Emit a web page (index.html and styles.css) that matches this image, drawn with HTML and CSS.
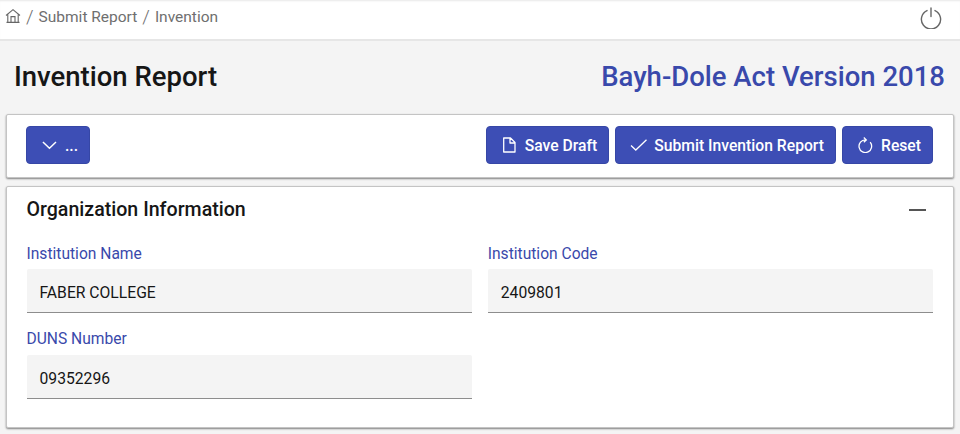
FILE: index.html
```html
<!DOCTYPE html>
<html lang="en">
<head>
<meta charset="utf-8">
<title>Invention Report</title>
<link rel="stylesheet" href="styles.css">
</head>
<body>
<header class="topbar">
  <nav class="crumbs">
    <svg class="home" viewBox="0 0 16 16" width="16" height="16"><path d="M1 7.500 8 1.600l7 5.900M2.800 6.200V14.400h10.400V6.200M6 14.400V8.600h4v5.800M1.500 14.400h13" fill="none" stroke="#666" stroke-width="1.100"/></svg>
    <span class="sep">/</span><span>Submit Report</span><span class="sep">/</span><span>Invention</span>
  </nav>
  <svg class="power" viewBox="0 0 22 22" width="22" height="22"><path d="M7 3.600a9.600 9.600 0 1 0 8 0M11 1v8.500" fill="none" stroke="#666" stroke-width="1.400" stroke-linecap="round"/></svg>
</header>
<main class="page">
  <div class="heading">
    <h1>Invention Report</h1>
    <div class="version">Bayh-Dole Act Version 2018</div>
  </div>
  <section class="card toolbar">
    <button class="btn menu-btn"><svg viewBox="0 0 16 16" width="16" height="16"><path d="M1 4.800 8 11.500l7-6.700" fill="none" stroke="#fff" stroke-width="1.600"/></svg><span>...</span></button>
    <div class="actions">
      <button class="btn"><svg viewBox="0 0 17 16" width="17" height="16"><path d="M2.700 1h6.800L14 5.500V15H2.700zM9 1V6h5" fill="none" stroke="#fff" stroke-width="1.300" stroke-linejoin="round"/></svg><span>Save Draft</span></button>
      <button class="btn"><svg viewBox="0 0 17 16" width="17" height="16"><path d="M1 8.500 5.800 13 16.500 2.800" fill="none" stroke="#fff" stroke-width="1.300"/></svg><span>Submit Invention Report</span></button>
      <button class="btn"><svg viewBox="0 0 17 16" width="17" height="16"><path d="M13.200 5.200A6.300 6.300 0 1 1 8.500 2.900M6.800 .5 9.300 2.900 6.800 5.300" fill="none" stroke="#fff" stroke-width="1.300"/></svg><span>Reset</span></button>
    </div>
  </section>
  <section class="card org">
    <div class="org-head">
      <h2>Organization Information</h2>
      <span class="collapse"></span>
    </div>
    <div class="fields">
      <div class="field"><label>Institution Name</label><div class="value">FABER COLLEGE</div></div>
      <div class="field"><label>Institution Code</label><div class="value">2409801</div></div>
      <div class="field"><label>DUNS Number</label><div class="value">09352296</div></div>
    </div>
  </section>
</main>
</body>
</html>
```
FILE: styles.css
```css
* { box-sizing: border-box; }
html, body { margin: 0; height: 434px; overflow: hidden; }
body { background: #f4f4f4; font-family: Roboto, "Liberation Sans", sans-serif; color: #161616; }
.topbar {
  height: 41px; background: #fff; padding: 0 18px 6px 5px;
  display: flex; align-items: center; justify-content: space-between;
  border-bottom: 2px solid #e6e6e6; box-shadow: inset 0 2px 2px -1px #e8e8e8;
}
.crumbs { display: flex; align-items: center; gap: 5px; font-size: 15.500px; color: #6f6f6f; }
.home { margin-bottom: 1px; }
.power { margin-top: 2px; }
.sep { font-size: 19px; font-weight: 300; }
.page { padding: 0 6px; }
.heading { height: 73px; padding: 0 9px 2px 8px; display: flex; align-items: center; justify-content: space-between; }
h1 { margin: 0; font-size: 27.500px; font-weight: 500; }
.version { font-size: 27.500px; font-weight: 500; color: #3949ab; }
.card { background: #fff; border: 1px solid #c4c4c4; border-radius: 2px; box-shadow: 0 1px 2px #808080; }
.toolbar { height: 64px; padding: 11px 20px 0 19px; display: flex; justify-content: space-between; margin-bottom: 8px; }
.actions { display: flex; gap: 6px; }
.btn {
  height: 38px; padding: 0 11px 0 14px; display: flex; align-items: center; gap: 7px;
  background: #3d4eb5; border: 1px solid #3647a6; border-radius: 4px; color: #fff;
  font: 500 15.700px Roboto, "Liberation Sans", sans-serif;
}
.menu-btn { width: 64px; padding: 0 11px 0 15px; gap: 8px; }
.org { height: 242px; padding: 0 20px 0 19.500px; }
.org-head { height: 45px; display: flex; align-items: center; justify-content: space-between; }
h2 { margin: 0; font-size: 19.600px; font-weight: 500; }
.collapse { width: 17px; height: 2px; background: #555; margin-right: 7px; }
.fields { display: grid; grid-template-columns: 1fr 1fr; column-gap: 16px; row-gap: 15px; padding-top: 11px; }
.field:nth-child(n+3) .value { margin-top: 1px; }
label { display: block; height: 26px; font-size: 15.600px; color: #3949ab; line-height: 22px; }
.value {
  height: 44px; padding: 3px 13px 0; display: flex; align-items: center; font-size: 15.700px;
  background: #f4f4f4; border-bottom: 1px solid #8d8d8d; border-radius: 2px 2px 0 0;
}
```
